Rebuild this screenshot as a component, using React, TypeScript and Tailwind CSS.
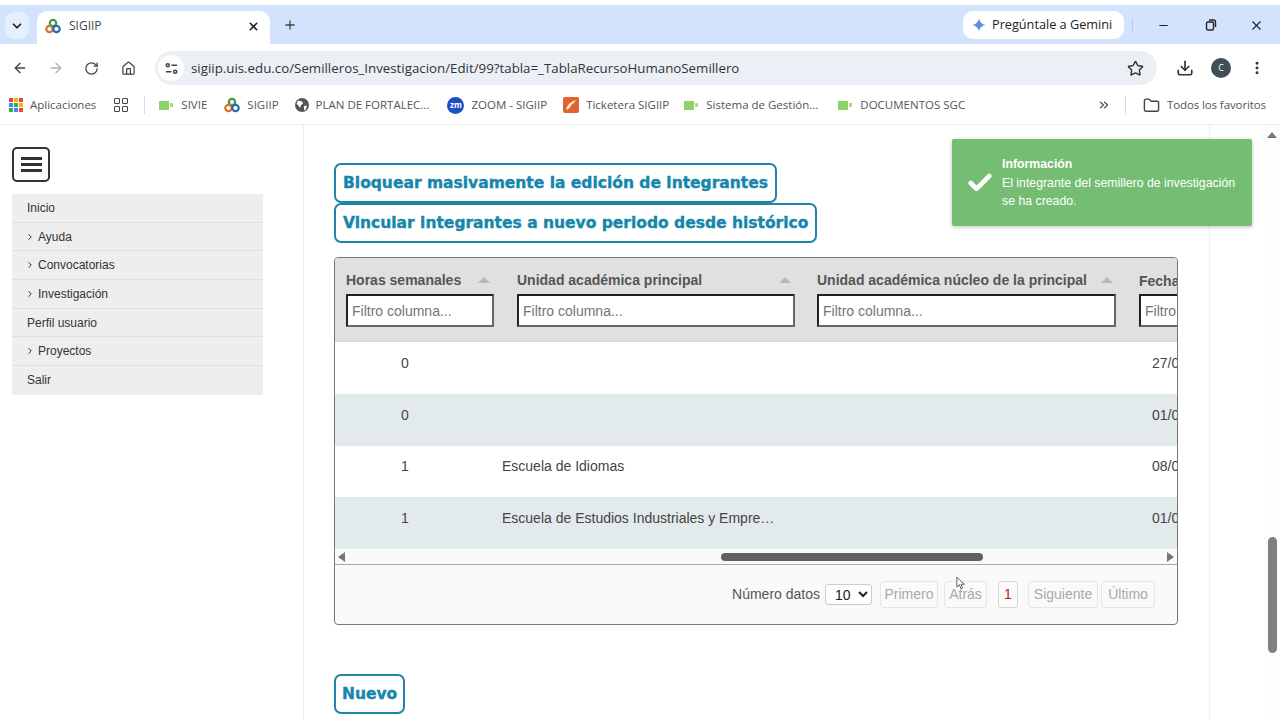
import { ArrowLeft, ArrowRight, RotateCw, Home, Star, Download, EllipsisVertical, X, Minus, Plus, ChevronDown, ChevronRight, ChevronsRight, Folder, Check } from "lucide-react";

const menu = [
  { label: "Inicio" },
  { label: "Ayuda", sub: true },
  { label: "Convocatorias", sub: true },
  { label: "Investigación", sub: true },
  { label: "Perfil usuario" },
  { label: "Proyectos", sub: true },
  { label: "Salir" },
];

const columns = [
  { title: "Horas semanales", input: "w-[148px]", gap: "mr-[23px]" },
  { title: "Unidad académica principal", input: "w-[278px]", gap: "mr-[22px]" },
  { title: "Unidad académica núcleo de la principal", input: "w-[299px]", gap: "mr-[22px]" },
];

const rows = [
  { hours: "0", unit: "", date: "27/0", shade: false },
  { hours: "0", unit: "", date: "01/0", shade: true },
  { hours: "1", unit: "Escuela de Idiomas", date: "08/0", shade: false },
  { hours: "1", unit: "Escuela de Estudios Industriales y Empre…", date: "01/0", shade: true },
];

function Sigiip() {
  return (
    <svg viewBox="0 0 16 16" className="w-[16px] h-[16px] shrink-0">
      <circle cx="8" cy="5" r="3.2" fill="none" stroke="#3f9a4a" strokeWidth="2.2" />
      <circle cx="4.5" cy="11" r="3.2" fill="none" stroke="#d9702c" strokeWidth="2.2" />
      <circle cx="11.5" cy="11" r="3.2" fill="none" stroke="#2b6ca8" strokeWidth="2.2" />
    </svg>
  );
}

function Meet() {
  return (
    <span className="flex items-center gap-[1px] w-[15px] shrink-0">
      <span className="w-[10px] h-[9px] bg-[#8fd16a]" />
      <span className="w-[3px] h-[4px] bg-[#a8dc8c]" />
    </span>
  );
}

function Bookmark({ icon, label, className = "" }: { icon: React.ReactNode; label: string; className?: string }) {
  return (
    <div className={`flex items-center gap-[7px] ${className}`}>
      {icon}
      <span>{label}</span>
    </div>
  );
}

function TealButton({ label, className = "" }: { label: string; className?: string }) {
  return (
    <button className={`h-[40px] pt-[1px] border-2 border-[#1f84a6] rounded-[7px] bg-white text-[#1687ab] text-[15.500px] font-bold font-['DejaVu_Sans',sans-serif] [-webkit-text-stroke:0.4px_#1687ab] ${className}`}>
      {label}
    </button>
  );
}

function PageButton({ label, className = "" }: { label: string; className?: string }) {
  return (
    <button className={`h-[27px] border border-[#e6e6e6] rounded-[3px] text-[#a9a9a9] text-[14px] ${className}`}>
      {label}
    </button>
  );
}

export default function App() {
  return (
    <div className="relative w-[1280px] h-[720px] overflow-hidden bg-white font-['Liberation_Sans',sans-serif] text-[#333]">
      {/* barra de pestañas */}
      <div className="pt-[5px] bg-white">
        <div className="h-[39px] bg-[#d3e3fd] flex items-end font-['Open_Sans',sans-serif]">
          <div className="self-start mt-[7px] ml-[5px] w-[24px] h-[27px] rounded-[9px] bg-[#e6effc] flex items-center justify-center">
            <ChevronDown className="w-[14px] h-[14px] text-[#1f1f1f]" strokeWidth={3} />
          </div>
          <div className="ml-[8px] w-[233px] h-[33px] bg-white rounded-t-[10px] flex items-center pl-[8px] pr-[10px] pb-[3px] text-[12px] text-[#444]">
            <Sigiip />
            <span className="ml-[8px]">SIGIIP</span>
            <X className="ml-auto w-[13px] h-[13px] text-[#222]" strokeWidth={3} />
          </div>
          <Plus className="self-center ml-[13px] w-[14px] h-[14px] text-[#444]" strokeWidth={2.2} />
          <div className="ml-auto self-start mt-[6px] w-[161px] h-[28px] bg-white rounded-[10px] flex items-center pl-[9px] gap-[6px] text-[12.700px] text-[#222]">
            <svg viewBox="0 0 16 16" className="w-[14px] h-[14px]">
              <defs>
                <linearGradient id="gem" x1="0" y1="0" x2="1" y2="1">
                  <stop offset="0" stopColor="#e8594a" />
                  <stop offset="0.5" stopColor="#5b8ee8" />
                  <stop offset="1" stopColor="#4cb5d8" />
                </linearGradient>
              </defs>
              <path d="M8 0 C8.600 4.600 11.400 7.400 16 8 C11.400 8.600 8.600 11.400 8 16 C7.400 11.400 4.600 8.600 0 8 C4.600 7.400 7.400 4.600 8 0Z" fill="url(#gem)" />
            </svg>
            <span>Pregúntale a Gemini</span>
          </div>
          <div className="self-start mt-[13px] ml-[8px] w-px h-[14px] bg-[#b7cdeb]" />
          <div className="self-start mt-[13px] flex items-center h-[14px] pr-[16px]">
            <Minus className="ml-[24px] w-[13px] h-[13px] text-[#222]" strokeWidth={2} />
            <svg viewBox="0 0 12 12" className="ml-[35px] w-[12px] h-[12px]" fill="none" stroke="#222" strokeWidth="1.4">
              <rect x="1.500" y="3" width="7" height="8" rx="1.600" />
              <path d="M4 1h4.500a2 2 0 0 1 2 2v5" />
            </svg>
            <X className="ml-[32px] w-[15px] h-[15px] text-[#222]" strokeWidth={1.8} />
          </div>
        </div>
      </div>

      {/* barra de direcciones */}
      <div className="h-[44px] pt-[4px] bg-white flex items-center pl-[12px] font-['Open_Sans',sans-serif]">
        <ArrowLeft className="w-[16px] h-[16px] text-[#444]" strokeWidth={2} />
        <ArrowRight className="ml-[20px] w-[16px] h-[16px] text-[#b0b0b0]" strokeWidth={2} />
        <RotateCw className="ml-[20px] w-[15px] h-[15px] text-[#444]" strokeWidth={2} />
        <Home className="ml-[22px] w-[15px] h-[15px] text-[#444]" strokeWidth={2} />
        <div className="ml-[19px] w-[1002px] h-[34px] rounded-full bg-[#eaf0f6] flex items-center pl-[3px] text-[13.300px] text-[#333]">
          <span className="w-[26px] h-[26px] rounded-full bg-white flex items-center justify-center">
            <svg viewBox="0 0 14 14" className="w-[13px] h-[13px]" fill="none" stroke="#444" strokeWidth="1.600">
              <circle cx="3" cy="3.500" r="1.700" />
              <path d="M7 3.500h6M1 10.500h6" />
              <circle cx="11" cy="10.500" r="1.700" />
            </svg>
          </span>
          <span className="ml-[7px] pt-[2px]">sigiip.uis.edu.co/Semilleros_Investigacion/Edit/99?tabla=_TablaRecursoHumanoSemillero</span>
          <Star className="ml-auto mr-[13px] w-[17px] h-[17px] text-[#333]" strokeWidth={2} />
        </div>
        <Download className="ml-[19px] w-[18px] h-[18px] text-[#333]" strokeWidth={2.2} />
        <span className="ml-[17px] w-[20px] h-[20px] rounded-full bg-[#3f4f56] text-white text-[9px] flex items-center justify-center">C</span>
        <EllipsisVertical className="ml-[18px] w-[16px] h-[16px] text-[#333]" strokeWidth={2.4} />
      </div>

      {/* favoritos */}
      <div className="h-[37px] pb-[2px] bg-white border-b border-[#ececec] flex items-center gap-[17px] pl-[9px] pr-[14px] text-[11.500px] text-[#555] font-['Open_Sans',sans-serif]">
        <Bookmark
          label="Aplicaciones"
          icon={
            <span className="grid grid-cols-3 gap-[1px] w-[14px] h-[14px]">
              {["#e8453c", "#f4b400", "#e8453c", "#4285f4", "#34a853", "#f4b400", "#34a853", "#4285f4", "#e8453c"].map((c, i) => (
                <span key={i} className="bg-current" style={{ color: c }} />
              ))}
            </span>
          }
        />
        <span className="ml-[1px] grid grid-cols-2 gap-[2px] w-[14px] h-[14px]">
          {[0, 1, 2, 3].map((i) => (
            <span key={i} className="border-[1.5px] border-[#444] rounded-[1px]" />
          ))}
        </span>
        <span className="-mr-[3px] -ml-[1px] w-px h-[18px] bg-[#d5dde6]" />
        <Bookmark label="SIVIE" icon={<Meet />} />
        <Bookmark label="SIGIIP" icon={<Sigiip />} />
        <Bookmark
          label="PLAN DE FORTALEC..."
          className="-ml-[1px]"
          icon={
            <svg viewBox="0 0 14 14" className="w-[14px] h-[14px] shrink-0">
              <circle cx="7" cy="7" r="7" fill="#555" />
              <path d="M3 2.500l4 1 1 2-2 1.500-1 3-2-3-1.500-1zM9 8l3-.5-1 3.500-2 1.500z" fill="#fff" />
            </svg>
          }
        />
        <Bookmark
          label="ZOOM - SIGIIP"
          className="ml-[1px]"
          icon={<span className="w-[17px] h-[17px] rounded-full bg-[#1c4fc4] text-white text-[8px] font-bold flex items-center justify-center">zm</span>}
        />
        <Bookmark
          label="Ticketera SIGIIP"
          className="-ml-[1px]"
          icon={
            <svg viewBox="0 0 16 16" className="w-[16px] h-[16px] shrink-0">
              <rect width="16" height="16" rx="2" fill="#e2622b" />
              <path d="M3 13c1-5 4-8 10-10-2 3-3 4-5 5 0 2-2 4-5 5z" fill="#fde7d4" />
            </svg>
          }
        />
        <Bookmark label="Sistema de Gestión..." className="-ml-[2px]" icon={<Meet />} />
        <Bookmark label="DOCUMENTOS SGC" className="ml-[3px]" icon={<Meet />} />
        <ChevronsRight className="ml-auto w-[14px] h-[14px] text-[#444]" strokeWidth={2} />
        <span className="-ml-[3px] w-px h-[18px] bg-[#d5dde6]" />
        <Bookmark label="Todos los favoritos" className="tracking-[-0.1px]" icon={<Folder className="w-[17px] h-[17px] text-[#444]" strokeWidth={2} />} />
      </div>

      {/* página */}
      <div className="flex h-[595px]">
        <aside className="w-[304px] shrink-0 border-r border-[#eeeeee] pl-[12px] pt-[22px]">
          <button className="w-[38px] h-[35px] border-2 border-[#333] rounded-[5px] flex flex-col items-center justify-center gap-[3px]">
            <span className="w-[21px] h-[3px] bg-[#333]" />
            <span className="w-[21px] h-[3px] bg-[#333]" />
            <span className="w-[21px] h-[3px] bg-[#333]" />
          </button>
          <ul className="mt-[12px] w-[251px] bg-[#eeeeee] text-[12px] text-[#333]">
            {menu.map((item) => (
              <li key={item.label} className="h-[28.700px] flex items-center pl-[15px] border-b border-[#dedede] last:border-b-0">
                {item.sub && <ChevronRight className="w-[10px] h-[10px] -ml-[2px] mr-[3px] text-[#333]" strokeWidth={2.4} />}
                {item.label}
              </li>
            ))}
          </ul>
        </aside>

        <main className="w-[906px] shrink-0 border-r border-[#eeeeee] pl-[30px] pt-[38px]">
          <div className="flex flex-col items-start">
            <TealButton label="Bloquear masivamente la edición de integrantes" className="px-[7px]" />
            <TealButton label="Vincular integrantes a nuevo periodo desde histórico" className="px-[7px]" />
          </div>

          <div className="mt-[14px] w-[844px] border border-[#777] rounded-[4px] overflow-hidden bg-[#fafafa]">
            <div className="h-[84px] bg-[#e0e0e0] border-b border-[#d8d8d8] flex overflow-hidden pl-[11px]">
              {columns.map((col) => (
                <div key={col.title} className={`shrink-0 pt-[13px] ${col.gap}`}>
                  <div className="flex items-center justify-between pr-[4px] h-[18px] text-[14px] font-bold text-[#555]">
                    <span>{col.title}</span>
                    <span className="ml-[14px] w-0 h-0 border-x-[6px] border-x-transparent border-b-[6px] border-b-[#b8b8b8]" />
                  </div>
                  <input
                    readOnly
                    placeholder="Filtro columna..."
                    className={`mt-[5px] h-[33px] px-[4px] border-2 border-t-[#222] border-l-[#222] border-r-[#666] border-b-[#666] bg-white text-[14px] placeholder:text-[#757575] ${col.input}`}
                  />
                </div>
              ))}
              <div className="shrink-0 pt-[13px]">
                <div className="h-[18px] text-[14px] font-bold text-[#555]">Fecha</div>
                <input readOnly placeholder="Filtro columna..." className="mt-[5px] w-[148px] h-[33px] px-[4px] border-2 border-t-[#222] border-l-[#222] border-r-[#666] border-b-[#666] bg-white text-[14px] placeholder:text-[#757575]" />
              </div>
            </div>

            {rows.map((row, i) => (
              <div key={i} className={`h-[51.750px] pb-[9px] grid grid-cols-[140px_650px_60px] items-center text-[14px] text-[#444] ${row.shade ? "bg-[#e3eaec]" : "bg-white"}`}>
                <span className="text-center">{row.hours}</span>
                <span className="pl-[27px]">{row.unit}</span>
                <span className="pl-[27px] whitespace-nowrap">{row.date}</span>
              </div>
            ))}

            <div className="h-[16px] bg-[#fafafa] border-b border-[#aaa] flex items-center px-[3px]">
              <span className="w-0 h-0 border-y-[5px] border-y-transparent border-r-[7px] border-r-[#777]" />
              <span className="ml-[376px] w-[262px] h-[8px] rounded-full bg-[#606060]" />
              <span className="ml-auto w-0 h-0 border-y-[5px] border-y-transparent border-l-[7px] border-l-[#777]" />
            </div>

            <div className="h-[59px] flex items-center justify-end pr-[22px] text-[14px] text-[#555]">
              <span>Número datos</span>
              <select defaultValue="10" className="ml-[5px] w-[47px] h-[21px] pl-[5px] border border-[#ccc] rounded-[3px] bg-white text-[#222]">
                <option>10</option>
              </select>
              <PageButton label="Primero" className="ml-[8px] w-[58px]" />
              <PageButton label="Atrás" className="ml-[6px] w-[43px]" />
              <PageButton label="1" className="ml-[11px] w-[20px] !text-[#b22234] !border-[#d5d5d5]" />
              <PageButton label="Siguiente" className="ml-[10px] w-[70px]" />
              <PageButton label="Último" className="ml-[3px] w-[54px]" />
            </div>
          </div>

          <TealButton label="Nuevo" className="mt-[49px] px-[6px]" />
        </main>

        <div className="flex-1 flex justify-end">
          <div className="w-[16px] bg-[#fdfdfd] flex flex-col items-center pt-[7px]">
            <span className="w-0 h-0 border-x-[5px] border-x-transparent border-b-[6px] border-b-[#777]" />
            <span className="mt-[399px] w-[9px] h-[116px] rounded-full bg-[#808080]" />
          </div>
        </div>
      </div>

      {/* aviso */}
      <div className="absolute left-[952px] top-[139px] w-[300px] h-[87px] rounded-[2px] bg-[#74bd73] shadow-[0_1px_4px_rgba(0,0,0,0.25)] flex items-center pl-[14px] pt-[1px] text-white text-[12.300px] leading-[18.500px]">
        <Check className="w-[28px] h-[28px] shrink-0" strokeWidth={4} />
        <div className="ml-[8px] pr-[10px]">
          <div className="font-bold">Información</div>
          <div>El integrante del semillero de investigación se ha creado.</div>
        </div>
      </div>

      {/* cursor */}
      <svg viewBox="0 0 12 16" className="absolute left-[956px] top-[576px] w-[10px] h-[14px]">
        <path d="M1 1v12l3-3 2 5 2-1-2-4.500h4z" fill="#fff" stroke="#444" strokeWidth="1" />
      </svg>
    </div>
  );
}
